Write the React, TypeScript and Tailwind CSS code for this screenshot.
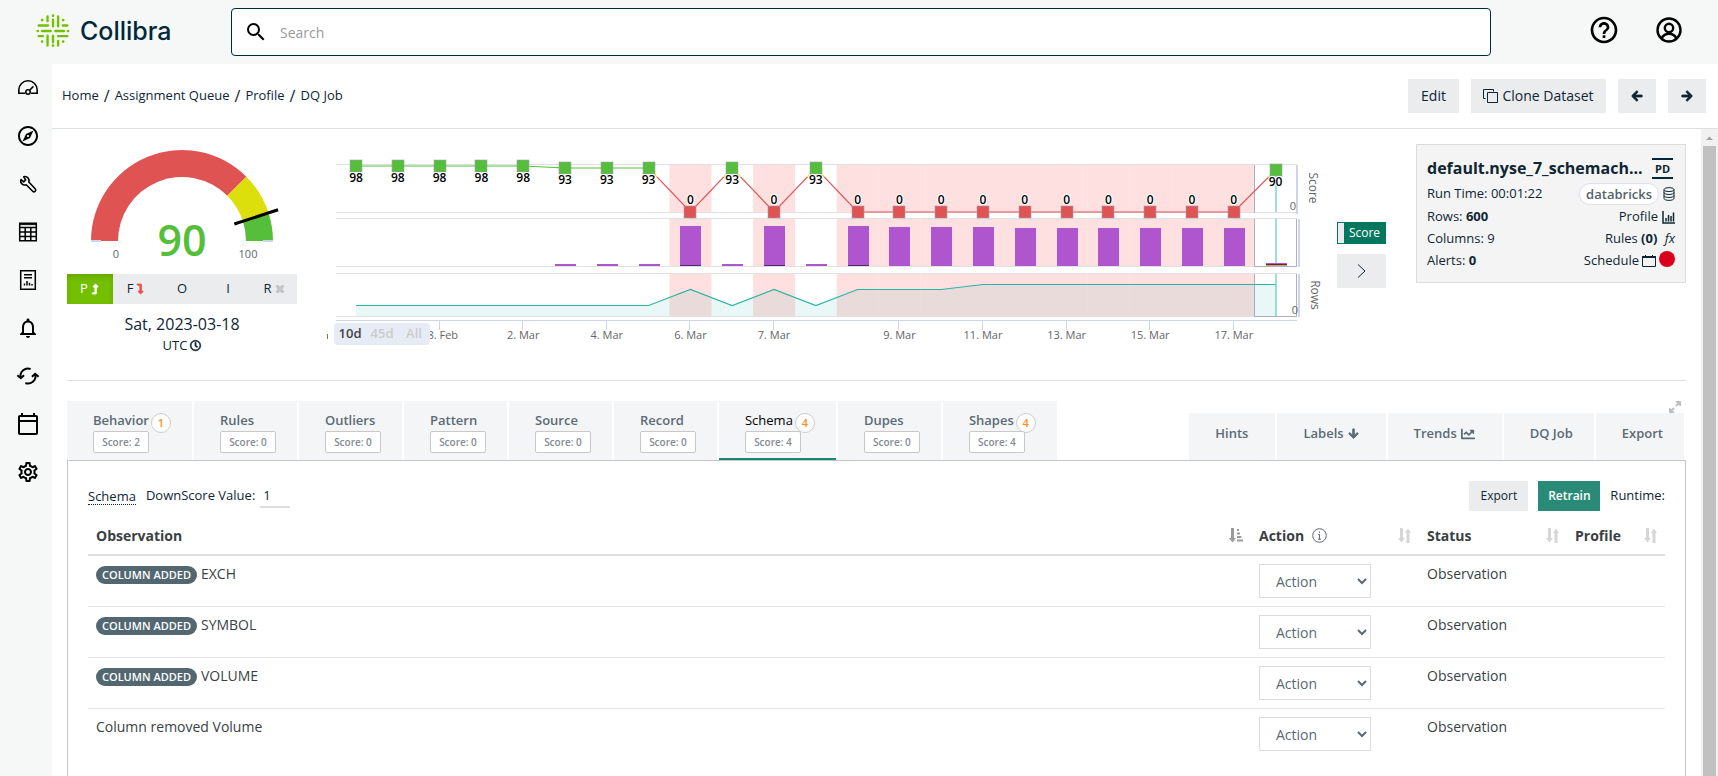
import { Fragment, useState } from "react";
import clsx from "clsx";
import {
  FaArrowDown,
  FaArrowLeft,
  FaArrowRight,
  FaChartLine,
  FaLevelDownAlt,
  FaLevelUpAlt,
  FaRegClock,
  FaTimes,
} from "react-icons/fa";
import {
  MdHelpOutline,
  MdNotificationsNone,
  MdOutlineCalendarToday,
  MdOutlineExplore,
  MdOutlineSettings,
  MdSearch,
} from "react-icons/md";

/* ---------- icons ---------- */

function LogoMark() {
  return (
    <svg
      width="34"
      height="34"
      viewBox="11 10 100 100"
      fill="none"
      stroke="#73c000"
      strokeWidth="7"
      aria-hidden="true"
    >
      <path d="M45 17V31M61 27V46M76 17V46M45 74V103M61 74V93M76 89V103" strokeLinecap="round" />
      <path d="M19 44H46M90 44H103M29 60H54M68 60H93M19 75H31M76 75H103" strokeLinecap="round" />
      <path
        d="M61 15h.1M61 103h.1M29 28h.1M91 28h.1M29 91h.1M91 91h.1M16 60h.1M105 60h.1"
        strokeLinecap="round"
        strokeWidth="8"
      />
    </svg>
  );
}

function GaugeIcon() {
  return (
    <svg width="24" height="24" viewBox="0 0 24 24" fill="none" stroke="currentColor" strokeWidth="1.6">
      <path d="M9 17.2H2.8V14a9.2 9.2 0 0 1 18.4 0v3.2H15" />
      <circle cx="12" cy="16" r="2.2" />
      <path d="M13.6 14.2 17.4 10.4" />
    </svg>
  );
}

function WrenchIcon() {
  return (
    <svg width="24" height="24" viewBox="0 0 24 24" fill="none" stroke="currentColor" strokeWidth="1.6" strokeLinejoin="round">
      <path d="M7.8 4.8a4 4 0 0 1 5 5.200l6.400 6.700a1.700 1.700 0 0 1-2.500 2.500l-6.500-6.500A4 4 0 0 1 5 7.500l2.700 2.300 1.900-1.800z" />
    </svg>
  );
}

function GridIcon() {
  return (
    <svg width="24" height="24" viewBox="0 0 24 24" fill="none" stroke="currentColor" strokeWidth="1.5">
      <path d="M3.7 3.2h16.6v17.6H3.7zM3.7 7.5h16.6M3.7 12h16.6M3.7 16.4h16.6M9.2 7.5v13.3M14.8 7.5v13.3" />
      <path d="M3.7 4.6h16.6" strokeWidth="1" />
    </svg>
  );
}

function ReportIcon() {
  return (
    <svg width="24" height="24" viewBox="0 0 24 24" fill="none" stroke="currentColor" strokeWidth="1.5">
      <path d="M4.7 2.8h14.6v18.4H4.7z" />
      <path d="M8 6.7h8M8 9.7h8" />
      <path d="M8.5 17.5v-2M11 17.5v-4.6M13.5 17.5v-2.8M16 17.5v-1.4" />
    </svg>
  );
}

function SyncIcon() {
  return (
    <svg width="24" height="24" viewBox="0 0 24 24" fill="none" stroke="currentColor" strokeWidth="2">
      <path d="M4.6 13.2A7.4 7.4 0 0 1 14.6 5M19.4 10.8A7.4 7.4 0 0 1 9.4 19" />
      <path d="M1.4 11.2 4.8 14.2 8 11.2M16 12.8 19.2 9.8 22.6 12.8" />
    </svg>
  );
}

function UserIcon() {
  return (
    <svg width="26" height="26" viewBox="0 0 26 26" fill="none" stroke="currentColor" strokeWidth="2.4">
      <circle cx="13" cy="13" r="11.5" />
      <circle cx="13" cy="11" r="4.2" />
      <path d="M5.6 21.2c1.6-2.8 4.2-4.4 7.4-4.4s5.8 1.6 7.4 4.4" />
    </svg>
  );
}

function CopyIcon() {
  return (
    <svg width="15" height="14" viewBox="0 0 15 14" fill="none" stroke="currentColor">
      <path d="M4.5 3.5h10v10h-10zM2.5 9.5h-2v-9h10v2" />
    </svg>
  );
}

function DatabaseIcon() {
  return (
    <svg width="12" height="14" viewBox="0 0 12 14" fill="none" stroke="currentColor">
      <ellipse cx="6" cy="2.6" rx="5" ry="2" />
      <path d="M1 2.6v8.8c0 1.1 2.2 2 5 2s5-.9 5-2V2.6M1 5.5c0 1.1 2.2 2 5 2s5-.9 5-2M1 8.5c0 1.1 2.2 2 5 2s5-.9 5-2" />
    </svg>
  );
}

function BarsIcon() {
  return (
    <svg width="13" height="13" viewBox="0 0 13 13" fill="none" stroke="currentColor" strokeWidth="1.5">
      <path d="M1 0v12h12" />
      <path d="M4 10.500V7M6.500 10.500V4M9 10.500V5M11.500 10.500V1.500" />
    </svg>
  );
}

function ScheduleIcon() {
  return (
    <svg width="14" height="12" viewBox="0 0 14 12" fill="none" stroke="currentColor">
      <path d="M.5 2.5h13v9H.5z" />
      <path d="M0 2h14" strokeWidth="2" />
      <path d="M3.5 0v2M10.5 0v2" />
    </svg>
  );
}

function InfoIcon() {
  return (
    <svg width="15" height="15" viewBox="0 0 15 15" fill="none" stroke="#5a6a72">
      <circle cx="7.5" cy="7.5" r="6.8" />
      <path d="M7.5 6.3v5M6.2 6.5h1.3M6 11.2h3M7.5 3.5v1.4" />
    </svg>
  );
}

function SortIcon() {
  return (
    <svg width="13" height="15" viewBox="0 0 13 15" fill="#d6d6d6">
      <path d="M2 0h3v10h2l-3.5 4.500L0 10h2zM8.500 15h3V5H13L10 .5 7 5h1.500z" />
    </svg>
  );
}

function SortedIcon() {
  return (
    <svg width="14" height="15" viewBox="0 0 14 15" fill="#9b9b9b">
      <path d="M2 0h3v10h2l-3.500 4.500L0 10h2zM8 1h2v2H8zM8 4.500h3v2H8zM8 8h4.500v2H8zM8 11.500h6v2H8z" />
    </svg>
  );
}

function ExpandIcon() {
  return (
    <svg width="12" height="12" viewBox="0 0 12 12" fill="#bdbdbd" stroke="#bdbdbd">
      <path d="M7 .5h4.500V5zM.5 7v4.500H5z" />
      <path d="M7 5 10 2M5 7 2 10" strokeWidth="2" />
    </svg>
  );
}

/* ---------- gauge ---------- */

const CX = 115;
const CY = 101;

function polar(value: number, r: number) {
  const a = Math.PI * (1 - value / 100);
  return `${(CX + r * Math.cos(a)).toFixed(2)} ${(CY - r * Math.sin(a)).toFixed(2)}`;
}

function arc(from: number, to: number) {
  return `M${polar(from, 91)}A91 91 0 0 1 ${polar(to, 91)}L${polar(to, 64)}A64 64 0 0 0 ${polar(from, 64)}Z`;
}

function Gauge({ value }: { value: number }) {
  return (
    <svg viewBox="0 0 230 126" className="block w-full overflow-visible">
      <path d={arc(0, 75)} fill="#df5353" />
      <path d={arc(75, 90)} fill="#dddf0d" />
      <path d={arc(90, 100)} fill="#55bf3b" />
      <path d="M24 101h10M196 101h10" stroke="#ccd6eb" strokeWidth="2" />
      <path d={`M${polar(value, 55)}L${polar(value, 101)}`} stroke="#000" strokeWidth="3" />
      <text x="115" y="116" textAnchor="middle" fontSize="43" fontWeight="600" fill="#55bf3b">
        {value}
      </text>
      <text x="49" y="118" textAnchor="middle" fontSize="11" fill="#666">0</text>
      <text x="181" y="118" textAnchor="middle" fontSize="11" fill="#666">100</text>
    </svg>
  );
}

/* ---------- history chart ---------- */

interface Run {
  score: number;
  rows: number;
  alerts: number;
  dark?: boolean;
}

const runs: Run[] = [
  { score: 98, rows: 11, alerts: 0 },
  { score: 98, rows: 11, alerts: 0 },
  { score: 98, rows: 11, alerts: 0 },
  { score: 98, rows: 11, alerts: 0 },
  { score: 98, rows: 11, alerts: 0 },
  { score: 93, rows: 11, alerts: 2 },
  { score: 93, rows: 11, alerts: 2 },
  { score: 93, rows: 11, alerts: 2 },
  { score: 0, rows: 27, alerts: 40, dark: true },
  { score: 93, rows: 11, alerts: 2 },
  { score: 0, rows: 27, alerts: 40, dark: true },
  { score: 93, rows: 11, alerts: 2 },
  { score: 0, rows: 27, alerts: 40, dark: true },
  { score: 0, rows: 27, alerts: 39 },
  { score: 0, rows: 27, alerts: 39 },
  { score: 0, rows: 32, alerts: 39 },
  { score: 0, rows: 32, alerts: 38 },
  { score: 0, rows: 32, alerts: 38 },
  { score: 0, rows: 32, alerts: 38 },
  { score: 0, rows: 32, alerts: 38 },
  { score: 0, rows: 32, alerts: 38 },
  { score: 0, rows: 32, alerts: 38 },
  { score: 90, rows: 32, alerts: 3 },
];

const ticks = [
  { at: 2, label: "28. Feb" },
  { at: 4, label: "2. Mar" },
  { at: 6, label: "4. Mar" },
  { at: 8, label: "6. Mar" },
  { at: 10, label: "7. Mar" },
  { at: 13, label: "9. Mar" },
  { at: 15, label: "11. Mar" },
  { at: 17, label: "13. Mar" },
  { at: 19, label: "15. Mar" },
  { at: 21, label: "17. Mar" },
];

const STEP = 41.8;
const px = (i: number) => 36 + i * STEP;
const scoreY = (v: number) => Math.round(72 - v * 0.47);
const panels = [
  { top: 24, bottom: 73 },
  { top: 78, bottom: 127 },
  { top: 133, bottom: 177 },
];

function HistoryChart() {
  const scoreLine = runs.map((r, i) => `${px(i)},${scoreY(r.score)}`).join(" ");
  const rowsLine = runs.map((r, i) => `${px(i)},${176.5 - r.rows}`).join(" ");

  return (
    <svg viewBox="0 0 1006 217" className="block w-full">
      <defs>
        <linearGradient id="zones" gradientUnits="userSpaceOnUse" x1="0" y1="24" x2="0" y2="73">
          <stop offset="0.17" stopColor="#55bf3b" />
          <stop offset="0.17" stopColor="#dddf0d" />
          <stop offset="0.27" stopColor="#dddf0d" />
          <stop offset="0.27" stopColor="#df5353" />
        </linearGradient>
      </defs>

      {panels.map((p) => (
        <Fragment key={p.top}>
          {runs.map((r, i) =>
            r.score === 0 ? (
              <rect key={i} x={px(i - 0.5)} y={p.top} width={STEP + 0.2} height={p.bottom - p.top} fill="#ffe0e0" />
            ) : null
          )}
          <path d={`M16 ${p.top + 0.5}H977M16 ${p.bottom - 0.5}H977`} stroke="#e0e0e3" />
        </Fragment>
      ))}

      {/* current run */}
      <path d="M934.5 25V73M934.5 79V126.5H976.5V79M934.5 134V176.5H976.5V134" fill="none" stroke="#adadc4" />
      <path d="M977 25V74M979 79V127M979 134V177" stroke="#ccd6eb" strokeWidth="2" />
      <path d="M956 36V72M956 79V126M956 134V176" stroke="#9fe0d6" strokeWidth="2" />

      {/* alerts */}
      {runs.map((r, i) =>
        r.alerts > 0 ? (
          <g key={i}>
            <rect x={Math.round(px(i)) - 10} y={126 - r.alerts} width="21" height={r.alerts} fill="#af56cf" />
            {r.dark && <rect x={Math.round(px(i)) - 10} y="125" width="21" height="1" fill="#492970" />}
          </g>
        ) : null
      )}
      <rect x="946" y="124" width="21" height="1" fill="#492970" />
      <rect x="946" y="125" width="21" height="1" fill="#f0a030" />

      {/* rows */}
      <polygon points={`${px(0)},176 ${rowsLine} ${px(22)},176`} fill="#2bb5a5" fillOpacity="0.1" />
      <polyline points={rowsLine} fill="none" stroke="#2bb5a5" strokeWidth="1.2" />

      {/* score */}
      <polyline points={scoreLine} fill="none" stroke="url(#zones)" strokeWidth="1.2" />
      {runs.map((r, i) => {
        const bad = r.score === 0;
        const y = scoreY(r.score);
        return (
          <g key={i}>
            <rect
              x={Math.round(px(i)) - 6}
              y={y - 6}
              width="12"
              height="12"
              fill={bad ? "#df5353" : "#55bf3b"}
              stroke="#a0a0b4"
              strokeOpacity="0.6"
            />
            <text
              x={px(i)}
              y={bad ? 64 : y + 16}
              textAnchor="middle"
              fontSize="12"
              fontWeight="600"
              fill="#000"
              stroke="#fff"
              strokeWidth="2"
              paintOrder="stroke"
            >
              {r.score}
            </text>
          </g>
        );
      })}

      {/* axes */}
      <path d="M16 180.5H977" stroke="#ccd6eb" />
      {ticks.map((t) => (
        <g key={t.label}>
          <path d={`M${Math.round(px(t.at)) - 0.5} 181V190`} stroke="#ccd6eb" />
          <text x={px(t.at)} y="199" textAnchor="middle" fontSize="11" fill="#666">
            {t.label}
          </text>
        </g>
      ))}
      <rect x="7" y="194" width="1" height="5" fill="#777" />
      <text x="973" y="70" textAnchor="middle" fontSize="11" fill="#666">0</text>
      <text x="975" y="174" textAnchor="middle" fontSize="11" fill="#666">0</text>
      <text transform="translate(989 48) rotate(90)" textAnchor="middle" fontSize="12" fill="#666">Score</text>
      <text transform="translate(991 155) rotate(90)" textAnchor="middle" fontSize="12" fill="#666">Rows</text>
    </svg>
  );
}

/* ---------- page pieces ---------- */

const navItems = [
  { label: "Dashboard", icon: <GaugeIcon /> },
  { label: "Explorer", icon: <MdOutlineExplore size={24} /> },
  { label: "Rule Builder", icon: <WrenchIcon /> },
  { label: "Datasets", icon: <GridIcon /> },
  { label: "Reports", icon: <ReportIcon /> },
  { label: "Alerts", icon: <MdNotificationsNone size={24} /> },
  { label: "Jobs", icon: <SyncIcon /> },
  { label: "Scheduler", icon: <MdOutlineCalendarToday size={24} /> },
  { label: "Settings", icon: <MdOutlineSettings size={24} /> },
];

const crumbs = ["Home", "Assignment Queue", "Profile", "DQ Job"];

const tabs = [
  { name: "Behavior", score: 2, badge: 1 },
  { name: "Rules", score: 0 },
  { name: "Outliers", score: 0 },
  { name: "Pattern", score: 0 },
  { name: "Source", score: 0 },
  { name: "Record", score: 0 },
  { name: "Schema", score: 4, badge: 4 },
  { name: "Dupes", score: 0 },
  { name: "Shapes", score: 4, badge: 4 },
];

const rows = [
  { added: true, text: "EXCH" },
  { added: true, text: "SYMBOL" },
  { added: true, text: "VOLUME" },
  { added: false, text: "Column removed Volume" },
];

function Header() {
  return (
    <header className="flex h-16 shrink-0 items-center bg-[#f5f8f7]">
      <a href="#home" className="flex w-[231px] items-center gap-[10px] pb-[2px] pl-9 text-[#00283c]">
        <LogoMark />
        <span className="font-['Inter'] text-[25px] leading-8 font-medium">Collibra</span>
      </a>
      <div className="flex h-12 flex-1 items-center gap-3 rounded border border-[#00283c] bg-white pl-3">
        <MdSearch size={24} className="text-black" />
        <input
          aria-label="Search"
          placeholder="Search"
          className="h-full flex-1 bg-transparent text-sm outline-none placeholder:text-[#9a9a9a]"
        />
      </div>
      <div className="flex w-[227px] items-center justify-end gap-9 pr-9 pb-1 text-black">
        <button aria-label="Help">
          <MdHelpOutline size={32} />
        </button>
        <button aria-label="Account">
          <UserIcon />
        </button>
      </div>
    </header>
  );
}

function Sidebar() {
  return (
    <nav className="flex w-[52px] shrink-0 flex-col bg-[#f5f8f7] pl-1 text-black">
      {navItems.map((item) => (
        <a key={item.label} href="#nav" aria-label={item.label} className="flex h-12 items-center justify-center">
          {item.icon}
        </a>
      ))}
    </nav>
  );
}

function Toolbar() {
  return (
    <div className="flex h-[65px] shrink-0 items-center justify-between border-b border-[#dbdfe2] pr-3 pl-[10px]">
      <div className="flex items-center gap-[5px] text-[13px]">
        {crumbs.map((c, i) => (
          <Fragment key={c}>
            {i > 0 && <span className="text-base leading-5">/</span>}
            <a href="#crumb">{c}</a>
          </Fragment>
        ))}
      </div>
      <div className="flex gap-3 text-sm">
        <button className="h-[34px] w-[51px] bg-[#ebecee]">Edit</button>
        <button className="flex h-[34px] w-[135px] items-center justify-center gap-1 bg-[#ebecee]">
          <CopyIcon />
          Clone Dataset
        </button>
        <button aria-label="Previous" className="flex h-[34px] w-[38px] items-center justify-center bg-[#ebecee]">
          <FaArrowLeft size={12} className="overflow-visible stroke-current stroke-[40px]" />
        </button>
        <button aria-label="Next" className="flex h-[34px] w-[38px] items-center justify-center bg-[#ebecee]">
          <FaArrowRight size={12} className="overflow-visible stroke-current stroke-[40px]" />
        </button>
      </div>
    </div>
  );
}

function ScoreColumn() {
  return (
    <div className="w-[230px] shrink-0 pt-[11px] text-center">
      <Gauge value={90} />
      <div className="mt-2 grid h-[30px] grid-cols-5 bg-[#ebecee] text-[13px]">
        <button className="flex items-center justify-center gap-[2px] bg-[#73bf00] text-white shadow-[inset_0_3px_5px_rgba(0,0,0,0.125)]">
          P <FaLevelUpAlt size={10} className="overflow-visible stroke-current stroke-[40px]" />
        </button>
        <button className="flex items-center justify-center gap-[2px]">
          F <FaLevelDownAlt size={10} className="overflow-visible stroke-current stroke-[40px] text-[#e8504f]" />
        </button>
        <button>O</button>
        <button>I</button>
        <button className="flex items-center justify-center gap-[3px]">
          R <FaTimes size={10} className="overflow-visible stroke-current stroke-[70px] text-[#c4c4c4]" />
        </button>
      </div>
      <div className="mt-2 text-base leading-6">Sat, 2023-03-18</div>
      <div className="flex items-center justify-center gap-[3px] text-[13px] leading-[18px]">
        UTC <FaRegClock size={11} className="overflow-visible stroke-current stroke-[25px]" />
      </div>
    </div>
  );
}

function ChartColumn() {
  const [range, setRange] = useState("10d");

  return (
    <div className="relative mt-[11px] ml-[23px] flex-1">
      <HistoryChart />
      {/* range selector sits on top of the axis */}
      <div className="absolute bottom-3 left-[14px] flex h-[22px] w-24 rounded-sm bg-[#e6ebf5] text-[13px]">
        {["10d", "45d", "All"].map((r) => (
          <button
            key={r}
            onClick={() => setRange(r)}
            className={clsx("flex-1 font-semibold", r === range ? "text-[#444]" : "text-[#ccc]")}
          >
            {r}
          </button>
        ))}
      </div>
    </div>
  );
}

function InfoCard() {
  return (
    <div className="mt-[15px] ml-[30px] w-[270px] shrink-0 border border-[#d9dde0] bg-[#f4f4f4] px-[10px] pt-3 pb-[10px] text-[13px]">
      <div className="mb-[3px] flex h-[22px] items-center justify-between pr-[2px]">
        <h2 className="text-base leading-[22px] font-bold whitespace-nowrap">default.nyse_7_schemach...</h2>
        <span className="h-[21px] w-[21px] border-y-2 border-[#00283c] text-center text-[11px] leading-[17px] font-bold">
          PD
        </span>
      </div>
      <div className="flex h-6 items-center justify-between">
        <span>Run Time: 00:01:22</span>
        <span className="flex items-center gap-1">
          <span className="h-[22px] rounded-full border border-[#dedeee] bg-white px-[6px] leading-5 font-semibold text-[#53636b]">
            databricks
          </span>
          <DatabaseIcon />
        </span>
      </div>
      <div className="flex h-[22px] items-center justify-between">
        <span>
          Rows: <b>600</b>
        </span>
        <a href="#profile" className="flex items-center gap-1">
          Profile <BarsIcon />
        </a>
      </div>
      <div className="flex h-[22px] items-center justify-between">
        <span>Columns: 9</span>
        <a href="#rules">
          Rules <b>(0)</b> <i className="ml-1">fx</i>
        </a>
      </div>
      <div className="flex h-[22px] items-center justify-between">
        <span>
          Alerts: <b>0</b>
        </span>
        <a href="#schedule" className="flex items-center gap-[3px]">
          Schedule <ScheduleIcon />
          <span className="mb-1 h-4 w-4 rounded-full bg-[#d9001b]" />
        </a>
      </div>
    </div>
  );
}

function TabBar() {
  const [active, setActive] = useState("Schema");

  return (
    <div className="flex items-end justify-between">
      <div className="flex gap-[2px]">
        {tabs.map((t) => (
          <button
            key={t.name}
            onClick={() => setActive(t.name)}
            className={clsx(
              "flex h-[59px] flex-col items-start border-b-2 bg-[#f4f5f7] pt-[10px] pr-[21px] pl-[26px]",
              t.name === active ? "border-[#1a866f]" : "border-[#f4f5f7]"
            )}
          >
            <span
              className={clsx(
                "flex h-5 items-center gap-[2px] text-[13px]",
                t.name === active ? "text-black" : "font-semibold text-[#5b6b75]"
              )}
            >
              {t.name}
              {t.badge && (
                <span className="mt-[3px] h-5 w-5 rounded-full border border-[#ccc] bg-white text-center text-[11px] leading-[18px] font-semibold text-[#ff8c1a]">
                  {t.badge}
                </span>
              )}
            </span>
            <span className="h-[22px] w-14 rounded-xs border border-[#c8c8c8] bg-white text-center text-[10px] leading-5 font-semibold text-[#848c94]">
              Score: {t.score}
            </span>
          </button>
        ))}
      </div>
      <div className="flex flex-col items-end pr-[2px]">
        <button aria-label="Expand" className="pr-[3px]">
          <ExpandIcon />
        </button>
        <div className="flex gap-[2px] text-[13px] font-semibold text-[#5b6b75]">
          <button className="h-[47px] bg-[#f4f5f7] pr-[27px] pb-[6px] pl-[26px]">Hints</button>
          <button className="flex h-[47px] items-center gap-1 bg-[#f4f5f7] pr-[27px] pb-[6px] pl-[26px]">
            Labels <FaArrowDown size={11} className="overflow-visible stroke-current stroke-[40px]" />
          </button>
          <button className="flex h-[47px] items-center gap-1 bg-[#f4f5f7] pr-[27px] pb-[6px] pl-[26px]">
            Trends <FaChartLine size={14} />
          </button>
          <button className="h-[47px] bg-[#f4f5f7] pr-[21px] pb-[6px] pl-[26px]">DQ Job</button>
          <button className="h-[47px] bg-[#f4f5f7] pr-[21px] pb-[6px] pl-[26px]">Export</button>
        </div>
      </div>
    </div>
  );
}

function SchemaPanel() {
  return (
    <section className="flex-1 border border-b-0 border-[#c6c6c6] px-5 pt-5">
      <div className="flex h-[30px] items-center text-[13px]">
        <a href="#schema" className="border-b border-dotted border-[#00283c] leading-4">
          Schema
        </a>
        <label htmlFor="downscore" className="ml-[10px]">
          DownScore Value:
        </label>
        <input id="downscore" defaultValue="1" className="ml-[5px] h-6 w-[30px] border-b-2 border-[#ddd] pl-[3px] outline-none" />
        <div className="ml-auto flex items-center gap-[10px] text-xs">
          <button className="h-[30px] w-[59px] bg-[#ebecee]">Export</button>
          <button className="h-[30px] w-[62px] bg-[#2a8a78] font-semibold text-white">Retrain</button>
          <span className="text-[13px]">Runtime:</span>
        </div>
      </div>

      <table className="mt-[6px] w-full table-fixed text-left text-sm text-[#3a3f44]">
        <thead>
          <tr className="h-[38px] border-b-2 border-[#dddfe2]">
            <th className="px-2 font-bold">
              <span className="flex items-center justify-between">
                Observation <SortedIcon />
              </span>
            </th>
            <th className="w-[168px] px-2 font-bold">
              <span className="flex items-center gap-2">
                Action <InfoIcon />
                <span className="ml-auto">
                  <SortIcon />
                </span>
              </span>
            </th>
            <th className="w-[148px] px-2 font-bold">
              <span className="flex items-center justify-between">
                Status <SortIcon />
              </span>
            </th>
            <th className="w-[98px] px-2 font-bold">
              <span className="flex items-center justify-between">
                Profile <SortIcon />
              </span>
            </th>
          </tr>
        </thead>
        <tbody>
          {rows.map((r) => (
            <tr key={r.text} className="border-b border-[#e4e6e8] align-top last:border-b-0">
              <td className="p-2">
                {r.added && (
                  <span className="mr-1 inline-block h-[18px] rounded-full bg-[#526770] px-[6px] text-[11px] leading-[18px] font-semibold text-white">
                    COLUMN ADDED
                  </span>
                )}
                {r.text}
              </td>
              <td className="p-2">
                <select
                  aria-label={`Action for ${r.text}`}
                  className="block h-[34px] w-28 border border-[#d9dde0] bg-white pl-3 text-[#5a6a72]"
                >
                  <option>Action</option>
                </select>
              </td>
              <td className="p-2">Observation</td>
              <td />
            </tr>
          ))}
        </tbody>
      </table>
    </section>
  );
}

export default function App() {
  return (
    <div className="flex h-screen flex-col overflow-hidden bg-white font-['Open_Sans',sans-serif] text-[#0e2633]">
      <Header />
      <div className="flex min-h-0 flex-1">
        <Sidebar />
        <main className="flex min-w-0 flex-1 flex-col">
          <Toolbar />
          <div className="flex min-h-0 flex-1">
            <div className="flex min-w-0 flex-1 flex-col overflow-hidden px-[15px]">
              <div className="mb-5 flex items-start border-b border-[#dbdfe2] pb-[23px]">
                <ScoreColumn />
                <ChartColumn />
                <div className="mt-[93px] ml-[11px] flex w-[49px] shrink-0 flex-col gap-[10px]">
                  <button className="flex h-[22px] border border-[#04775f] bg-[#ebecee] text-xs text-white">
                    <span className="ml-[6px] flex h-full flex-1 items-center justify-center bg-[#04775f]">Score</span>
                  </button>
                  <button aria-label="Expand chart" className="flex h-[34px] items-center justify-center bg-[#ebecee]">
                    <svg width="9" height="14" viewBox="0 0 9 14" fill="none" stroke="currentColor">
                      <path d="M1 .5 8 7 1 13.5" />
                    </svg>
                  </button>
                </div>
                <InfoCard />
              </div>
              <TabBar />
              <SchemaPanel />
            </div>
            {/* scroll track */}
            <div className="flex w-[17px] shrink-0 flex-col bg-[#f1f1f1] px-[2px]" aria-hidden="true">
              <svg width="13" height="17" viewBox="0 0 13 17" fill="#a3a3a3">
                <path d="M3 11 6.5 7.5 10 11z" />
              </svg>
              <div className="flex-1 bg-[#c1c1c1]" />
            </div>
          </div>
        </main>
      </div>
    </div>
  );
}
